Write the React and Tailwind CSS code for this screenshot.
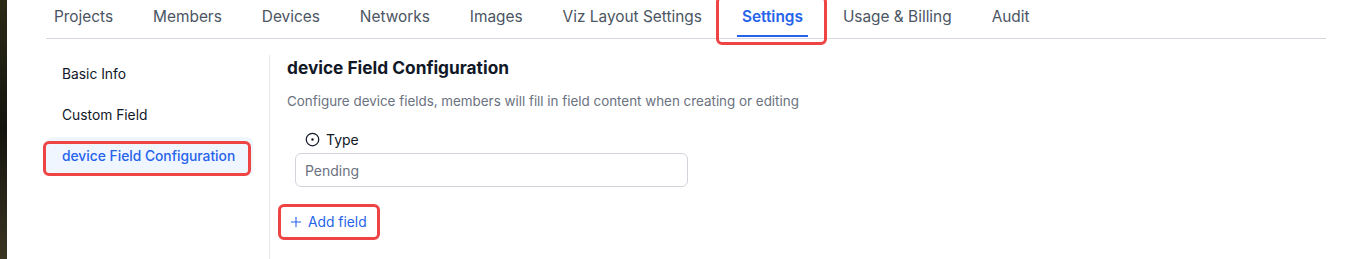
import { CircleDot, Plus } from 'lucide-react';

const tabs = ['Projects', 'Members', 'Devices', 'Networks', 'Images', 'Viz Layout Settings', 'Settings', 'Usage & Billing', 'Audit'];

const sideItems = [
  { id: 'basic', label: 'Basic Info' },
  { id: 'custom', label: 'Custom Field' },
  { id: 'device', label: 'device Field Configuration', active: true },
];

function Highlight({ className }) {
  return <span className={`pointer-events-none absolute rounded-[6px] border-[3px] border-[#ef4444] ${className}`} />;
}

export default function App() {
  return (
    <div className="flex h-[259px] w-[1368px] overflow-hidden bg-white font-['Inter','Noto_Sans',sans-serif]">
      {/* desktop peeking at the edge */}
      <div className="w-[7px] shrink-0 bg-gradient-to-b from-[#2b2a17] via-[#14140e] to-[#3b3523]" />

      <div className="flex-1 pl-[39px] pr-[42px]">
        {/* Tabs */}
        <div className="flex h-[39px] gap-[30px] border-b border-[#d5d9e0] pl-[3px]">
          {tabs.map((t) => {
            const active = t === 'Settings';
            return (
              <div key={t} className="relative h-full whitespace-nowrap px-[5px] pt-[4px]">
                <span className={`text-[15.4px] leading-[22px] ${active ? 'font-semibold text-[#2563eb]' : 'text-[#4b5563]'}`}>{t}</span>
                {active && (
                  <>
                    <span className="absolute bottom-[1px] left-0 right-0 h-[2px] bg-[#2563eb]" />
                    <Highlight className="-left-[21px] -right-[19px] -top-[4px] -bottom-[7px]" />
                  </>
                )}
              </div>
            );
          })}
        </div>

        {/* Body */}
        <div className="flex pt-4">
          <div className="flex h-[220px] w-[224px] shrink-0 flex-col gap-[2px] border-r border-[#e5e7eb]">
            {sideItems.map((item) => (
              <div
                key={item.id}
                className={`relative flex h-[39px] w-[207px] items-center whitespace-nowrap rounded-md px-4 text-[13.8px] ${
                  item.active ? 'bg-[#eff6ff] font-medium text-[#2563eb]' : 'text-[#111827]'
                }`}
              >
                {item.label}
                {item.active && <Highlight className="-left-[3px] right-[2px] top-[4px] bottom-0" />}
              </div>
            ))}
          </div>

          <div className="flex-1 pl-[17px]">
            <h2 className="text-[17.3px] font-bold leading-[26px] text-[#111827]">device Field Configuration</h2>
            <p className="mt-[10px] text-[13.4px] leading-[20px] text-[#6b7280]">
              Configure device fields, members will fill in field content when creating or editing
            </p>

            <div className="ml-2 mt-[18px]">
              <div className="flex h-[20px] items-center gap-[6px] pl-[10px] text-[14px] text-[#111827]">
                <CircleDot size={15} strokeWidth={2} />
                <span>Type</span>
              </div>
              <div className="mt-1 flex h-[34px] w-[393px] items-center rounded-md border border-[#d1d5db] px-[9px] text-[14px] text-[#6b7280]">
                Pending
              </div>
            </div>

            <button className="relative mt-[21px] flex h-[28px] items-center gap-[4px] pl-[1px] pr-1 text-[13.8px] text-[#2563eb]">
              <Plus size={16} strokeWidth={1.6} />
              <span>Add field</span>
              <Highlight className="-left-[9px] -right-[9px] -top-[4px] -bottom-[4px]" />
            </button>
          </div>
        </div>
      </div>
    </div>
  );
}
